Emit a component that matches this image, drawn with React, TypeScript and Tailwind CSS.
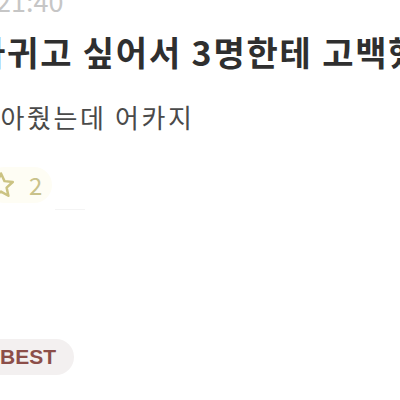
import React from "react";

const StarIcon = () => (
  <svg width="30" height="30" viewBox="0 0 24 24" fill="none">
    <path
      d="M12 2.8l2.8 6.1 6.6.7-4.9 4.5 1.4 6.5L12 17.3l-5.9 3.3 1.4-6.5-4.9-4.5 6.6-.7z"
      stroke="#cbc383"
      strokeWidth="2"
      strokeLinejoin="round"
    />
  </svg>
);

export default function App() {
  return (
    <div
      className="w-[400px] h-[400px] overflow-hidden bg-white"
      style={{ fontFamily: '"Noto Sans CJK KR", "Noto Sans", sans-serif' }}
    >
      <div className="flex flex-col items-start">
        {/* time */}
        <div className="-mt-[13px] -ml-[4px] text-[27px] leading-none text-[#c6c6c6] whitespace-nowrap">
          21:40
        </div>

        {/* title */}
        <div className="mt-[21px] -ml-[26px] text-[34px] leading-none font-bold tracking-[1.8px] text-[#2f2f2f] whitespace-nowrap">
          사귀고 싶어서 3명한테 고백했는데
        </div>

        {/* body */}
        <div className="mt-[35px] -ml-[26px] text-[26px] leading-none tracking-[2.6px] text-[#4a4a4a] whitespace-nowrap">
          받아줬는데 어카지
        </div>

        {/* like */}
        <div className="mt-[37px] -ml-[14px] flex items-center gap-[13px] rounded-full bg-[#fefdf4] pr-[10px] py-[3px]">
          <StarIcon />
          <span className="text-[24px] leading-none text-[#c9c28a]">2</span>
        </div>

        <div className="mt-[6px] ml-[55px] w-[30px] h-px bg-[#f4f4f4]" />

        {/* badge */}
        <div className="mt-[129px] -ml-[16px] rounded-full bg-[#f3f0f0] pl-[16px] pr-[18px] py-[6px]">
          <span
            className="text-[21px] leading-none font-bold text-[#8c4e49]"
            style={{ fontFamily: '"Liberation Sans", sans-serif' }}
          >
            BEST
          </span>
        </div>
      </div>
    </div>
  );
}
